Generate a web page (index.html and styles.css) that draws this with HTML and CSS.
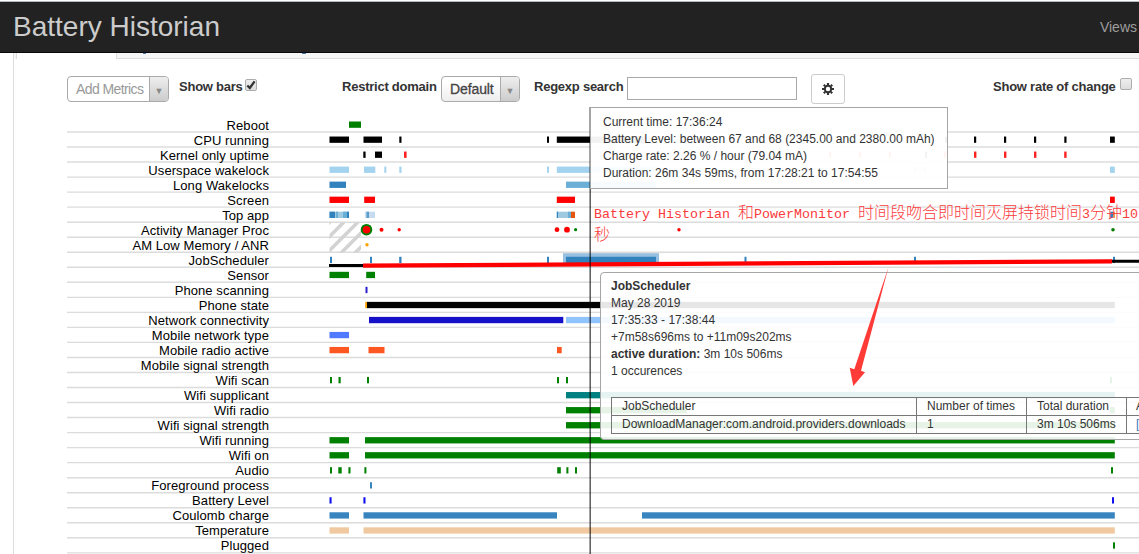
FILE: index.html
```html
<!DOCTYPE html>
<html lang="en">
<head>
    <meta charset="UTF-8">
    <title>Battery Historian</title>
    <link rel="stylesheet" href="styles.css">
</head>
<body>
    <nav class="navbar">
        <div class="brand">Battery Historian</div>
        <div class="nav-link">Views</div>
    </nav>

    <div class="panel">
        <div class="tabs">
            <div class="tab-active"></div>
            <div class="tab-rest"><i class="tick"></i><i class="tick second"></i></div>
        </div>

        <div class="controls">
            <div class="select muted add-metrics"><span>Add Metrics</span><b>▼</b></div>
            <label class="show-bars">Show bars</label>
            <span class="checkbox"><svg width="10" height="10" viewBox="0 0 10 10"><path d="M1.3 5.5L3.8 8L8.6 1.4" fill="none" stroke="#333" stroke-width="2.3"/></svg></span>
            <label class="restrict">Restrict domain</label>
            <div class="select domain"><span>Default</span><b>▼</b></div>
            <label class="regexp">Regexp search</label>
            <div class="search"></div>
            <div class="settings">
                <svg width="12" height="12" viewBox="0 0 12 12">
                    <circle cx="6" cy="6" r="3.2" fill="none" stroke="#333" stroke-width="2"/>
                    <path d="M6 0V2M6 10V12M0 6H2M10 6H12M1.8 1.8L3.2 3.2M8.8 8.8L10.2 10.2M10.2 1.8L8.8 3.2M3.2 8.8L1.8 10.2" stroke="#333" stroke-width="2.2"/>
                </svg>
            </div>
            <label class="rate">Show rate of change</label>
            <span class="checkbox rate-box"></span>
        </div>

        <div class="timeline">
            <svg id="chart" width="1072" height="447" viewBox="67 107 1072 447">
                <defs>
                    <pattern id="hatch" width="14" height="14" patternUnits="userSpaceOnUse" x="330" y="222">
                        <path d="M-3 17L17 -3M-3 3L3 -3M11 17L17 11" stroke="#d3d3d3" stroke-width="3.6"/>
                    </pattern>
                </defs>
                <g id="rows"></g>
                <rect x="329.5" y="222.5" width="31.5" height="30" fill="url(#hatch)"/>
                <g id="dots"></g>
                <path d="M329 265.5H364M1111 261.3H1139" stroke="#000" stroke-width="3"/>
                <path d="M363 265.6L1112 261.4" stroke="#f00" stroke-width="4.2"/>
                <path class="cursor" d="M590.2 107V554"/>
            </svg>

            <div class="status-tip">
                <div>Current time: 17:36:24</div>
                <div>Battery Level: between 67 and 68 (2345.00 and 2380.00 mAh)</div>
                <div>Charge rate: 2.26 % / hour (79.04 mA)</div>
                <div>Duration: 26m 34s 59ms, from 17:28:21 to 17:54:55</div>
            </div>

            <div class="event-tip">
                <div><b>JobScheduler</b></div>
                <div>May 28 2019</div>
                <div>17:35:33 - 17:38:44</div>
                <div>+7m58s696ms to +11m09s202ms</div>
                <div><b>active duration:</b> 3m 10s 506ms</div>
                <div>1 occurences</div>
                <table>
                    <tr><td class="col-name">JobScheduler</td><td class="col-count">Number of times</td><td class="col-total">Total duration</td><td class="col-uid">A</td></tr>
                    <tr><td>DownloadManager:com.android.providers.downloads</td><td>1</td><td>3m 10s 506ms</td><td><a>[</a></td></tr>
                </table>
            </div>

            <div class="note"><span>Battery Historian </span>和<span>PowerMonitor </span>时间段吻合即时间灭屏持锁时间<span>3</span>分钟<span>10</span><br>秒</div>

            <svg class="arrow" width="1072" height="447" viewBox="67 107 1072 447">
                <path d="M888.5 267L854.3 369.3L849.7 367.7L853.3 386L865 372.3L861 370.7Z" fill="#ff3b37"/>
            </svg>
        </div>
    </div>

    <script src="chart.js"></script>
</body>
</html>
```
FILE: styles.css
```css
* {
    box-sizing: border-box;
}

body {
    margin: 0;
    height: 554px;
    overflow: hidden;
    background: #fff;
    color: #333;
    font-family: "Liberation Sans", Arial, sans-serif;
    font-size: 13px;
}

.navbar {
    display: flex;
    justify-content: space-between;
    align-items: center;
    height: 52px;
    margin-top: 1px;
    padding: 0 2px 0 13px;
    background: #222;
    border-top: 1px solid #b4babd;
    border-bottom: 1px solid #080808;
    white-space: nowrap;
}

.brand {
    color: #ccc;
    font-size: 28px;
}

.nav-link {
    color: #9d9d9d;
    font-size: 14px;
}

.panel {
    height: 501px;
    margin-left: 13px;
    border-left: 1px solid #ddd;
}

/* tab strip, mostly scrolled under the navbar */
.tabs {
    display: flex;
    height: 6px;
    background: #f5f5f5;
    padding-left: 2px;
}

.tab-active {
    width: 101px;
    background: #fff;
    border-left: 1px solid #ddd;
    border-right: 1px solid #ddd;
}

.tab-rest {
    flex: 1;
    display: flex;
    border-bottom: 1px solid #ddd;
}

.tick {
    width: 3px;
    height: 1px;
    margin-left: 26px;
    background: #4f78b0;
}

.tick.second {
    width: 4px;
    margin-left: 156px;
}

.controls {
    display: flex;
    align-items: flex-start;
    height: 48px;
    padding: 15px 0 0 53px;
    white-space: nowrap;
}

.controls > * {
    flex: none;
}

.controls label {
    font-size: 13px;
    font-weight: bold;
    letter-spacing: -0.24px;
    line-height: 15px;
    margin-top: 5px;
}

.select {
    display: flex;
    height: 26px;
    margin-top: 2px;
    border: 1px solid #aaa;
    border-radius: 4px;
    background: linear-gradient(#fff 20%, #eee);
    color: #444;
    font-size: 14px;
    line-height: 25px;
    overflow: hidden;
}

.select span {
    flex: 1;
    padding-left: 8px;
}

.select b {
    width: 19px;
    border-left: 1px solid #aaa;
    background: linear-gradient(#eee, #ccc);
    color: #888;
    font-size: 9px;
    text-align: center;
    line-height: 28px;
}

.select.muted {
    color: #999;
    background: #fff;
}

.add-metrics {
    width: 102px;
}

.add-metrics span {
    letter-spacing: -0.6px;
}

.show-bars {
    width: 66px;
    margin-left: 10px;
}

.checkbox {
    display: flex;
    align-items: center;
    justify-content: center;
    width: 12px;
    height: 12px;
    margin-top: 5px;
    border: 1px solid #adadad;
    border-radius: 2px;
    background: linear-gradient(#eee, #ddd);
}

.restrict {
    width: 99px;
    margin-left: 85px;
}

.domain {
    width: 79px;
}

.domain span {
    -webkit-text-stroke: 0.3px #444;
    letter-spacing: -0.1px;
}

.regexp {
    width: 93px;
    margin-left: 14px;
}

.search {
    width: 170px;
    height: 23px;
    margin-top: 3px;
    border: 1px solid #a9a9a9;
}

.settings {
    display: flex;
    align-items: center;
    justify-content: center;
    width: 34px;
    height: 30px;
    margin-left: 14px;
    border: 1px solid #ccc;
    border-radius: 3px;
}

.rate {
    width: 127px;
    margin-left: 148px;
}

.rate-box {
    margin-top: 4px;
}

.timeline {
    position: relative;
    width: 1072px;
    height: 447px;
    margin-left: 53px;
    overflow: hidden;
}

#chart {
    display: block;
}

#rows text {
    font-size: 13px;
    letter-spacing: 0.08px;
    fill: #000;
    text-anchor: end;
}

.grid-line {
    stroke: #dcdcdc;
    stroke-width: 1.4;
}

.cursor {
    stroke: #000;
    stroke-opacity: 0.65;
    stroke-width: 1.5;
}

.status-tip,
.event-tip {
    position: absolute;
    border: 1px solid #a5a5a5;
    font-size: 12px;
    line-height: 17px;
    white-space: nowrap;
}

.status-tip {
    left: 523px;
    top: 0;
    width: 358px;
    height: 82px;
    padding: 6px 12px;
    background: rgba(255, 255, 255, 0.95);
}

.event-tip {
    left: 533px;
    top: 165px;
    width: 560px;
    height: 168px;
    padding: 5px 10px;
    border-radius: 4px;
    background: rgba(255, 255, 255, 0.9);
}

.event-tip table {
    width: 620px;
    margin-top: 17px;
    border-collapse: collapse;
    table-layout: fixed;
    line-height: 17px;
}

.event-tip td {
    padding: 0 10px;
    border: 1px solid #777;
}

.event-tip a {
    color: #337ab7;
}

.col-name {
    width: 305px;
}

.col-count {
    width: 110px;
}

.col-total {
    width: 100px;
}

.event-tip td:last-child {
    padding-left: 9px;
}

.note {
    position: absolute;
    left: 527px;
    top: 95px;
    color: #fa3a3a;
    font-family: "Noto Sans CJK SC", sans-serif;
    font-size: 16px;
    font-weight: 300;
    line-height: 19px;
    white-space: nowrap;
}

.note span {
    font-family: "Liberation Mono", monospace;
    font-size: 13.33px;
    white-space: pre;
}

.arrow {
    position: absolute;
    left: 0;
    top: 0;
}
```
FILE: chart.js
```js
const SVG_NS = 'http://www.w3.org/2000/svg';
const ROW = 15.03;

// label, default colour, bars as [start, end, colour?]
const metrics = [
    ['Reboot', '#008000', [[349, 361]]],
    ['CPU running', '#000', [[329.5, 349], [363.5, 382], [399.3, 401.5], [547, 549], [556.8, 645], [945, 947], [974, 976.2], [1004, 1006.2], [1034, 1036.2], [1064.3, 1066.5], [1110, 1114.8]]],
    ['Kernel only uptime', '#000', [[363.3, 365.6], [375, 382], [404, 406.6, '#f22'], [829, 831, '#f22'], [859, 861, '#f22'], [889, 891, '#f22'], [925, 927], [944, 946, '#f22'], [974, 976.4, '#f22'], [1004, 1006.4, '#f22'], [1034, 1036.4, '#f22'], [1064.2, 1066.6, '#f22']]],
    ['Userspace wakelock', '#a3d3ef', [[329.5, 349], [364, 375.3], [384.3, 386.3], [399.3, 401.5], [547, 549], [556.8, 660], [914, 916], [924, 926], [1110, 1114.8]]],
    ['Long Wakelocks', '#3182bd', [[329.5, 346], [566, 656, '#6baed6']]],
    ['Screen', '#f00', [[329.5, 349], [364.2, 375], [556.8, 575], [1110, 1114.8]]],
    ['Top app', '#9ecae1', [[329.5, 349], [329.5, 335, '#3182bd'], [336, 338, '#6baed6'], [343, 347, '#6baed6'], [347, 349, '#3182bd'], [365, 375, '#c6dbef'], [366.5, 369, '#5a9fcb'], [556.8, 570], [556.8, 558, '#3182bd'], [568, 571, '#6baed6'], [571, 575, '#e6550d'], [1110, 1113, '#3182bd'], [1113, 1115, '#e6965d']]],
    ['Activity Manager Proc', '#f00', []],
    ['AM Low Memory / ANR', '#ffa500', []],
    ['JobScheduler', '#3182bd', [[330, 332], [370, 372], [399.2, 401.5], [547, 549], [563, 659], [744.5, 746.5], [914, 916], [1113, 1115]]],
    ['Sensor', '#008000', [[329.5, 349], [366.2, 375]]],
    ['Phone scanning', '#2a20d0', [[365.5, 367.5]]],
    ['Phone state', '#000', [[365.2, 367, '#ffa500'], [367, 1114.8]]],
    ['Network connectivity', '#1610c8', [[369, 563.3], [566, 1114.8, '#8fc4ff']]],
    ['Mobile network type', '#5179ff', [[329.5, 349]]],
    ['Mobile radio active', '#ff5722', [[329.5, 349], [368.5, 384.5], [557, 561.7]]],
    ['Mobile signal strength', '#000', []],
    ['Wifi scan', '#008000', [[330, 332], [338.5, 340.7], [367, 369], [557, 559], [566, 568], [1110, 1112]]],
    ['Wifi supplicant', '#008080', [[566, 1114.8]]],
    ['Wifi radio', '#008000', [[566, 687], [1110, 1114.8]]],
    ['Wifi signal strength', '#008000', [[566, 1114.8]]],
    ['Wifi running', '#008000', [[329.5, 349], [365, 1114.8]]],
    ['Wifi on', '#008000', [[329.5, 349], [365, 1114.8]]],
    ['Audio', '#008000', [[330, 332], [338.3, 341.7], [348.4, 350.5], [364.4, 366.4], [557.2, 560.8], [566.4, 568.4], [575, 577], [1111, 1113]]],
    ['Foreground process', '#3884bf', [[370, 372]]],
    ['Battery Level', '#1010f0', [[329.5, 331.6], [363.4, 365.5], [1112, 1114]]],
    ['Coulomb charge', '#3884bf', [[329.5, 349], [363.5, 557], [642, 1114.8]]],
    ['Temperature', '#f0c9a0', [[329.5, 349], [363.5, 1114.8]]],
    ['Plugged', '#008000', [[1113, 1115]]]
];

// x, y, radius, fill, outline
const dots = [
    [366.5, 229.7, 4.8, '#f00', '#008000'],
    [381.5, 229.7, 2, '#f00'],
    [399.2, 229.7, 1.7, '#f00'],
    [557, 229.7, 2.4, '#f00'],
    [567, 229.7, 2.9, '#f00'],
    [575.6, 229.7, 1.6, '#008000'],
    [679, 229.7, 1.7, '#f00'],
    [1113, 229.7, 1.8, '#008000'],
    [367, 244.8, 1.7, '#ffa500']
];

function add(parent, name, attrs) {
    const el = document.createElementNS(SVG_NS, name);
    Object.entries(attrs).forEach(([key, value]) => el.setAttribute(key, value));
    parent.appendChild(el);
    return el;
}

const rows = document.getElementById('rows');

metrics.forEach(([label, color, bars], i) => {
    const top = 121.5 + i * ROW;
    add(rows, 'line', { class: 'grid-line', x1: 67, x2: 1139, y1: top + 10.5, y2: top + 10.5 });
    add(rows, 'text', { x: 269, y: 130 + i * 15 }).textContent = label;
    if (label === 'JobScheduler') {
        // hovered event
        add(rows, 'rect', { x: 563, y: 253.2, width: 96, height: 11, fill: '#96bfe0' });
        bars = bars.map(([a, b]) => a === 563 ? [566, 656] : [a, b]);
    }
    bars.forEach(([start, end, fill]) => {
        add(rows, 'rect', { x: start, y: top, width: end - start, height: 6.3, fill: fill || color });
    });
});

dots.forEach(([cx, cy, r, fill, stroke]) => {
    add(document.getElementById('dots'), 'circle', { cx, cy, r, fill, stroke: stroke || 'none', 'stroke-width': 2 });
});
```
